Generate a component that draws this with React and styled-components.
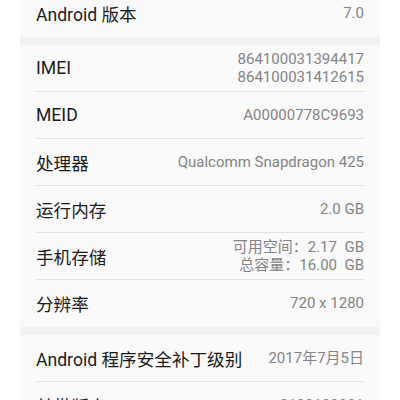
import React from "react";
import styled, { createGlobalStyle } from "styled-components";

const Global = createGlobalStyle`
  html, body { margin: 0; padding: 0; background: #ffffff; }
  body { font-family: Roboto, "Noto Sans CJK SC", sans-serif; overflow: hidden; }
`;

const Page = styled.div`
  width: 360px;
  margin: -10px auto 0;
  background: #f1f1f1;
  display: flex;
  flex-direction: column;
  gap: 8px;
`;

const Card = styled.div`
  background: #fafafa;
  padding: 0 16px;
  display: flex;
  flex-direction: column;
`;

const Row = styled.div`
  height: 46px;
  display: flex;
  align-items: center;
  justify-content: space-between;
  border-bottom: 1px solid ${(p) => (p.$last ? "transparent" : "#e3e3e3")};
`;

const Label = styled.div`
  font-size: 17.6px;
  color: #1c1c1c;
  white-space: nowrap;
`;

const Value = styled.div`
  font-size: 15px;
  line-height: 18px;
  color: #858585;
  text-align: right;
  white-space: pre;
`;

const groups = [
  [["Android 版本", "7.0"]],
  [
    ["IMEI", "864100031394417\n864100031412615"],
    ["MEID", "A00000778C9693"],
    ["处理器", "Qualcomm Snapdragon 425"],
    ["运行内存", "2.0 GB"],
    ["手机存储", "可用空间：2.17  GB\n总容量：16.00  GB"],
    ["分辨率", "720 x 1280"],
  ],
  [
    ["Android 程序安全补丁级别", "2017年7月5日"],
    ["基带版本", "2100100001"],
  ],
];

export default function App() {
  return (
    <>
      <Global />
      <Page>
        {groups.map((g, gi) => (
          <Card key={gi}>
            {g.map(([l, v], i) => (
              <Row key={l} $last={i === g.length - 1}>
                <Label>{l}</Label>
                <Value>{v}</Value>
              </Row>
            ))}
          </Card>
        ))}
      </Page>
    </>
  );
}
